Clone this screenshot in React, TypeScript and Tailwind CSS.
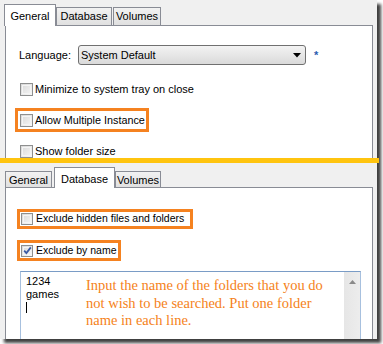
import React from 'react';

const Checkbox = ({ checked = false, size = 13 }: { checked?: boolean; size?: number }) => (
  <span
    className={`relative flex shrink-0 items-center justify-center border border-[#8e8f8f] bg-gradient-to-br from-[#d8d8d8] to-[#f7f7f7] ${
      size === 13 ? 'w-[13px] h-[13px]' : 'w-[12px] h-[12px]'
    }`}
  >
    <span className="absolute inset-[1px] border border-[#f4f4f4]" />
    {checked && (
      <svg width="9" height="9" viewBox="0 0 9 9" className="relative">
        <path d="M1.2 4.6 L3.4 7 L7.8 1.4" fill="none" stroke="#3b5aa3" strokeWidth="1.8" />
      </svg>
    )}
  </span>
);

const Tab = ({ label, active, w, h }: { label: string; active?: boolean; w: string; h: string }) => (
  <div
    className={`flex items-start justify-center border border-b-0 border-[#898c95] ${w} ${h} ${
      active ? 'relative z-10 -mb-px bg-white pt-[4px]' : 'bg-gradient-to-b from-[#f2f2f2] to-[#e0e0e0] pt-[1px]'
    }`}
  >
    <span className="leading-[14px]">{label}</span>
  </div>
);

export default function App() {
  return (
    <div className="w-[383px] h-[344px] bg-white font-['Liberation_Sans',Arial,sans-serif] text-[11px] text-black">
      <div className="flex w-[377px] h-[339px] flex-col bg-[#f0f0f0] shadow-[4px_4px_3px_rgba(0,0,0,0.75)]">
        {/* General tab page */}
        <div className="flex h-[158px] flex-col overflow-hidden">
          <div className="flex items-end pl-[4px] pt-[4px]">
            <Tab label="General" active w="w-[52px]" h="h-[22px]" />
            <Tab label="Database" w="w-[56px]" h="h-[18px]" />
            <div className="w-[1px]" />
            <Tab label="Volumes" w="w-[48px]" h="h-[18px]" />
          </div>
          <div className="ml-[5px] flex w-[368px] flex-1 flex-col border border-b-0 border-[#898c95] bg-white">
            <div className="mt-[19px] flex h-[20px] items-center pl-[13px]">
              <span className="w-[59px]">Language:</span>
              <div className="flex h-[20px] w-[228px] items-center justify-between rounded-[3px] border border-[#707070] bg-gradient-to-b from-[#f3f3f3] to-[#dadada] pl-[2px] pr-[4px]">
                <span>System Default</span>
                <svg width="8" height="5" viewBox="0 0 8 5">
                  <path d="M0 0 H8 L4 4.5 Z" fill="#000" />
                </svg>
              </div>
              <span className="ml-[8px] text-[#2a5db0] font-bold">*</span>
            </div>
            <div className="mt-[18px] flex h-[13px] items-center gap-[2px] pl-[14px]">
              <Checkbox />
              <span className="whitespace-nowrap">Minimize to system tray on close</span>
            </div>
            <div className="ml-[9px] mt-[12px] flex h-[24px] w-[134px] items-center gap-[2px] border-[3px] border-[#f58220] pl-[2px]">
              <Checkbox />
              <span className="whitespace-nowrap text-[10.8px]">Allow Multiple Instance</span>
            </div>
            <div className="mt-[13px] flex h-[13px] items-center gap-[2px] pl-[14px]">
              <Checkbox />
              <span className="whitespace-nowrap">Show folder size</span>
            </div>
          </div>
        </div>

        <div className="h-[5px] w-[379px] bg-[#ffc40f]" />

        {/* Database tab page */}
        <div className="flex flex-1 flex-col overflow-hidden">
          <div className="flex items-end pl-[5px] pt-[4px]">
            <Tab label="General" w="w-[47px]" h="h-[16px]" />
            <div className="w-[2px]" />
            <Tab label="Database" active w="w-[61px]" h="h-[21px]" />
            <Tab label="Volumes" w="w-[46px]" h="h-[16px]" />
          </div>
          <div className="ml-[5px] flex w-[368px] flex-1 flex-col border border-b-0 border-[#898c95] bg-white">
            <div className="ml-[11px] mt-[21px] flex h-[20px] w-[176px] items-center gap-[3px] border-[3px] border-[#f58220] pl-[1px]">
              <Checkbox size={12} />
              <span className="whitespace-nowrap text-[10.5px]">Exclude hidden files and folders</span>
            </div>
            <div className="ml-[11px] mt-[11px] flex h-[21px] w-[104px] items-center gap-[3px] border-[3px] border-[#f58220] pl-[1px]">
              <Checkbox checked size={12} />
              <span className="whitespace-nowrap text-[10.5px]">Exclude by name</span>
            </div>
            <div className="relative ml-[14px] mt-[10px] flex w-[341px] flex-1 border border-b-0 border-[#a7c0de] border-t-[#7a9cc6]">
              <div className="flex-1 pl-[5px] pt-[3px] leading-[13px]">
                <div>1234</div>
                <div>games</div>
                <div className="mt-[1px] h-[11px] w-px bg-black" />
              </div>
              <div className="flex w-[16px] justify-center bg-gradient-to-r from-[#e6e6e6] to-[#ededed] pt-[8px]">
                <svg width="7" height="4" viewBox="0 0 7 4">
                  <path d="M0 4 L3.5 0 L7 4 Z" fill="#8a8a8a" />
                </svg>
              </div>
              <div className="absolute left-[65px] top-[5px] whitespace-nowrap font-['Liberation_Serif','Times_New_Roman',serif] text-[14.5px] leading-[17.5px] text-[#f58220]">
                Input the name of the folders that you do
                <br />
                not wish to be searched. Put one folder
                <br />
                name in each line.
              </div>
            </div>
          </div>
        </div>
      </div>
    </div>
  );
}
